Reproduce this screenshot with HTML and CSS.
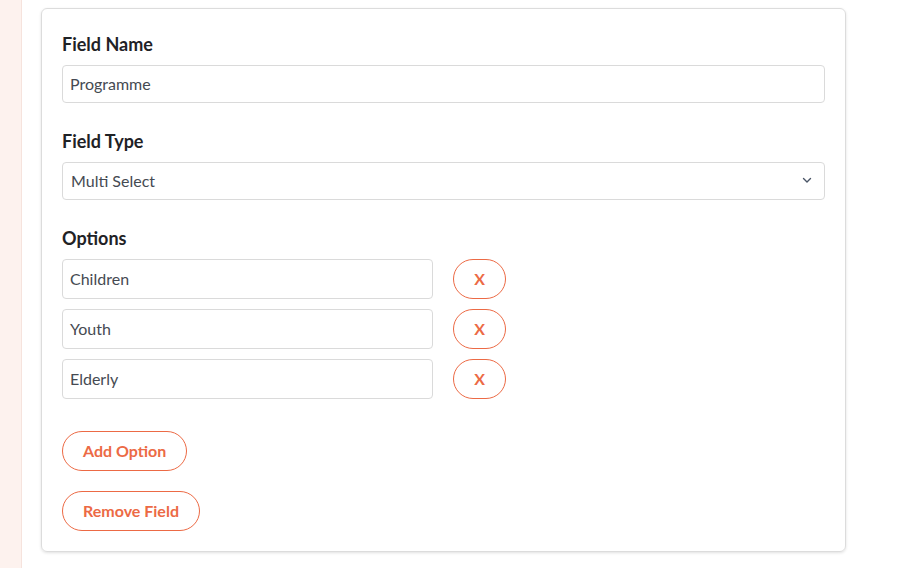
FILE: index.html
```html
<!DOCTYPE html>
<html>
<head>
<meta charset="utf-8">
<link rel="stylesheet" href="styles.css">
</head>
<body>
<div class="page">
  <aside class="strip"></aside>
  <main class="main">
    <section class="card">
      <label class="label">Field Name</label>
      <div class="input">Programme</div>
      <label class="label">Field Type</label>
      <div class="input select">
        <span>Multi Select</span>
        <svg class="chev" width="10" height="7" viewBox="0 0 10 7"><path d="M1.5 1.5 L5 5 L8.5 1.5" fill="none" stroke="#4a5566" stroke-width="1.4" stroke-linecap="round" stroke-linejoin="round"/></svg>
      </div>
      <label class="label">Options</label>
      <div class="options">
        <div class="opt-row"><div class="input opt">Children</div><button class="btn x">X</button></div>
        <div class="opt-row"><div class="input opt">Youth</div><button class="btn x">X</button></div>
        <div class="opt-row"><div class="input opt">Elderly</div><button class="btn x">X</button></div>
      </div>
      <div class="actions">
        <button class="btn">Add Option</button>
        <button class="btn">Remove Field</button>
      </div>
    </section>
  </main>
</div>
</body>
</html>
```

FILE: styles.css
```css
* { box-sizing: border-box; }
html, body { margin: 0; padding: 0; }
body {
  width: 904px;
  height: 568px;
  overflow: hidden;
  background: #fff;
  font-family: Lato, "Open Sans", sans-serif;
  color: #212529;
}
.page { display: flex; height: 568px; }
.strip {
  width: 22px;
  flex: none;
  background: #fdf2ee;
  border-right: 1px solid #f6e3dd;
}
.main { padding: 8px 0 0 19px; }
.card {
  width: 805px;
  height: 544px;
  border: 1px solid #dcdcdc;
  border-radius: 6px;
  box-shadow: 0 1px 3px rgba(0,0,0,0.12);
  padding: 24px 20px 20px 20px;
  display: flex;
  flex-direction: column;
}
.label {
  display: block;
  font-size: 18px;
  font-weight: 700;
  line-height: 22px;
  margin-bottom: 10px;
  color: #1f2226;
}
.input {
  height: 40px;
  border: 1px solid #dadada;
  border-radius: 4px;
  padding: 0 7px 2px 7px;
  display: flex;
  align-items: center;
  font-size: 16px;
  color: #454a52;
  margin-bottom: 27px;
}
.select { justify-content: space-between; padding-left: 8px; padding-right: 12px; }
.chev { display: block; }
.options { display: flex; flex-direction: column; gap: 10px; }
.opt-row { display: flex; align-items: center; gap: 20px; }
.input.opt { width: 371px; margin-bottom: 0; }
.btn {
  height: 40px;
  border: 1px solid #ec6a45;
  border-radius: 20px;
  background: #fff;
  color: #ec6a45;
  font-family: Lato, "Open Sans", sans-serif;
  font-weight: 700;
  font-size: 16px;
  padding: 0 20px 2px 20px;
  cursor: pointer;
}
.btn.x { width: 53px; padding: 0 0 2px 0; font-size: 16px; }
.actions {
  margin-top: 32px;
  display: flex;
  flex-direction: column;
  align-items: flex-start;
  gap: 20px;
}
```
